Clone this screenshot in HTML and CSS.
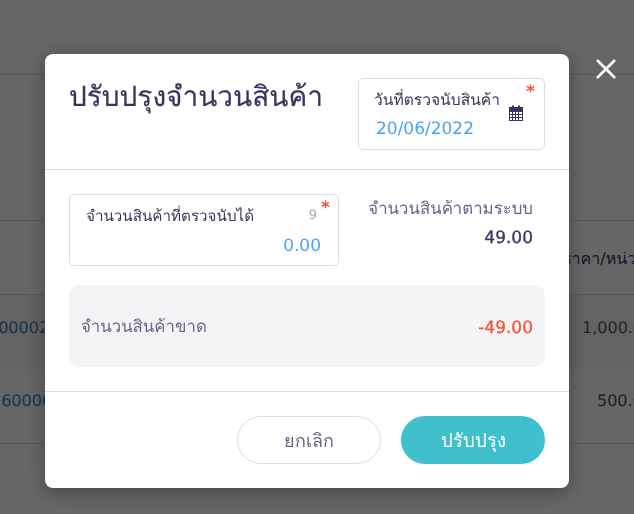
FILE: index.html
```html
<!DOCTYPE html>
<html lang="en">

<head>
    <meta charset="UTF-8">
    <meta name="viewport" content="width=device-width, initial-scale=1.0">
    <title>ปรับปรุงจำนวนสินค้า</title>
    <link rel="stylesheet" href="styles.css">
</head>

<body>

    <!-- Page behind the dialog -->
    <div class="page">
        <div class="page-top"></div>
        <div class="page-gap"></div>
        <div class="table-head"><span class="price-head">ราคา/หน่วย</span></div>
        <div class="table-row table-row-odd">
            <span class="code code-first">000002</span>
            <span class="price price-first">1,000.00</span>
        </div>
        <div class="table-row table-row-even">
            <span class="code code-second">160000</span>
            <span class="price price-second">500.00</span>
        </div>
    </div>

    <div class="overlay"></div>

    <button class="close-btn" type="button" aria-label="ปิด">
        <svg width="22" height="22" viewBox="0 0 22 22">
            <path d="M2 2 L20 20 M20 2 L2 20" stroke="#fff" stroke-width="2.6" fill="none" />
        </svg>
    </button>

    <div class="modal">
        <div class="modal-header">
            <h1>ปรับปรุงจำนวนสินค้า</h1>
            <div class="field date-field">
                <label>วันที่ตรวจนับสินค้า</label>
                <span class="star">*</span>
                <div class="field-value">20/06/2022</div>
                <svg class="calendar" width="16" height="16" viewBox="0 0 16 16">
                    <path d="M4 0.5h2v1.5h-2z M10 0.5h2v1.5h-2z" fill="#3a3560" />
                    <path d="M1 2h14v14h-14z M2 7v2h2v-2z M5 7v2h2v-2z M8 7v2h2v-2z M11 7v2h3v-2z M2 10v2h2v-2z M5 10v2h2v-2z M8 10v2h2v-2z M11 10v2h3v-2z M2 13v2h2v-2z M5 13v2h2v-2z M8 13v2h2v-2z M11 13v2h3v-2z" fill="#3a3560" fill-rule="evenodd" />
                </svg>
            </div>
        </div>

        <div class="modal-body">
            <div class="qty-row">
                <div class="field count-field">
                    <label>จำนวนสินค้าที่ตรวจนับได้</label>
                    <span class="counter">9</span>
                    <span class="star">*</span>
                    <div class="field-value">0.00</div>
                </div>
                <div class="system-qty">
                    <div class="system-label">จำนวนสินค้าตามระบบ</div>
                    <div class="system-value">49.00</div>
                </div>
            </div>
            <div class="missing">
                <span class="missing-label">จำนวนสินค้าขาด</span>
                <span class="missing-value">-49.00</span>
            </div>
        </div>

        <div class="modal-footer">
            <button class="btn btn-cancel" type="button">ยกเลิก</button>
            <button class="btn btn-save" type="button">ปรับปรุง</button>
        </div>
    </div>

</body>

</html>
```

FILE: styles.css
```css
* {
    box-sizing: border-box;
}

html,
body {
    margin: 0;
    height: 100%;
    overflow: hidden;
}

body {
    font-family: "DejaVu Sans", "Noto Sans", sans-serif;
    color: #3a3560;
    background-color: #fff;
    text-rendering: geometricPrecision;
}

.page {
    height: 514px;
    overflow: hidden;
}

.page-top {
    height: 75px;
    border-bottom: 1px solid #ddd;
}

.page-gap {
    height: 145px;
}

.table-head {
    height: 75px;
    border-top: 1px solid #ddd;
    border-bottom: 1px solid #ddd;
    position: relative;
}

.table-row {
    position: relative;
    font-size: 16px;
}

.table-row-odd {
    height: 74px;
    background-color: #f7f7f7;
}

.table-row-even {
    height: 75px;
    border-bottom: 1px solid #ddd;
}

.price-head {
    position: absolute;
    left: 563px;
    top: 26px;
    font-size: 16px;
    white-space: nowrap;
}

.code {
    position: absolute;
    color: #3f7fc4;
    top: 23px;
}

.code-first {
    left: -12px;
}

.code-second {
    left: -9px;
    top: 22px;
}

.price {
    position: absolute;
    top: 23px;
    color: #55556a;
    white-space: nowrap;
}

.price-first {
    left: 582px;
}

.price-second {
    left: 597px;
    top: 22px;
}

.overlay {
    position: fixed;
    inset: 0;
    background-color: rgba(0, 0, 0, 0.6);
}

.close-btn {
    position: fixed;
    left: 595px;
    top: 58px;
    width: 22px;
    height: 22px;
    padding: 0;
    border: none;
    background: none;
}

.modal {
    position: fixed;
    left: 45px;
    top: 54px;
    width: 524px;
    height: 434px;
    background-color: #fff;
    border-radius: 8px;
    box-shadow: 0 4px 20px rgba(0, 0, 0, 0.35);
}

.modal-header {
    height: 116px;
    padding: 25px 24px 0;
    display: flex;
    justify-content: space-between;
    border-bottom: 1px solid #dcdae8;
}

h1 {
    margin: 0;
    font-size: 28px;
    font-weight: 400;
    line-height: 36px;
    color: #3a3560;
    -webkit-text-stroke: 0.2px #3a3560;
}

.field {
    position: relative;
    border: 1px solid #dcdae8;
    border-radius: 5px;
    height: 72px;
}

.date-field {
    width: 187px;
    height: 72px;
    margin-top: -1px;
    padding: 10px 15px;
}

.count-field {
    width: 270px;
    padding: 10px 16px;
}

label {
    display: block;
    font-size: 15.6px;
    line-height: 22px;
}

.count-field label {
    font-size: 15.2px;
}

.star {
    position: absolute;
    right: 9px;
    top: 5px;
    color: #f4553a;
    font-size: 17px;
    font-weight: 700;
    line-height: 17px;
}

.count-field .star {
    right: 8px;
    top: 5px;
}

.counter {
    position: absolute;
    right: 21px;
    top: 13px;
    font-size: 13px;
    line-height: 16px;
    color: #aaa;
}

.field-value {
    font-size: 17px;
    line-height: 24px;
    color: #4aa3f5;
    margin-top: 6px;
}

.date-field .field-value {
    padding-left: 2px;
}

.count-field .field-value {
    text-align: right;
    padding-right: 1px;
    margin-top: 7px;
}

.calendar {
    position: absolute;
    right: 20px;
    top: 26px;
}

.modal-body {
    height: 222px;
    padding: 24px 24px 0;
    border-bottom: 1px solid #dcdae8;
}

.qty-row {
    display: flex;
    justify-content: space-between;
}

.system-qty {
    text-align: right;
    padding: 1px 12px 0 0;
}

.system-label {
    font-size: 16.8px;
    line-height: 26px;
    color: #6a6688;
}

.system-value {
    margin-top: 5px;
    font-size: 17px;
    line-height: 24px;
    -webkit-text-stroke: 0.3px #3a3560;
}

.missing {
    margin-top: 19px;
    height: 82px;
    padding: 2px 12px 0;
    background-color: #f4f4f7;
    border-radius: 10px;
    display: flex;
    justify-content: space-between;
    align-items: center;
}

.missing-label {
    font-size: 16.8px;
    color: #6a6688;
}

.missing-value {
    font-size: 17px;
    padding-top: 2px;
    color: #f4553a;
    -webkit-text-stroke: 0.3px #f4553a;
}

.modal-footer {
    height: 95px;
    padding: 24px 24px 0;
    display: flex;
    justify-content: flex-end;
    gap: 20px;
}

.btn {
    width: 144px;
    height: 48px;
    border-radius: 24px;
    font-family: inherit;
    font-size: 18px;
}

.btn-cancel {
    background-color: #fff;
    border: 1px solid #dcdae8;
    color: #6a6688;
}

.btn-save {
    background-color: #3fc0cc;
    border: none;
    color: #fff;
    font-size: 18.5px;
}
```
